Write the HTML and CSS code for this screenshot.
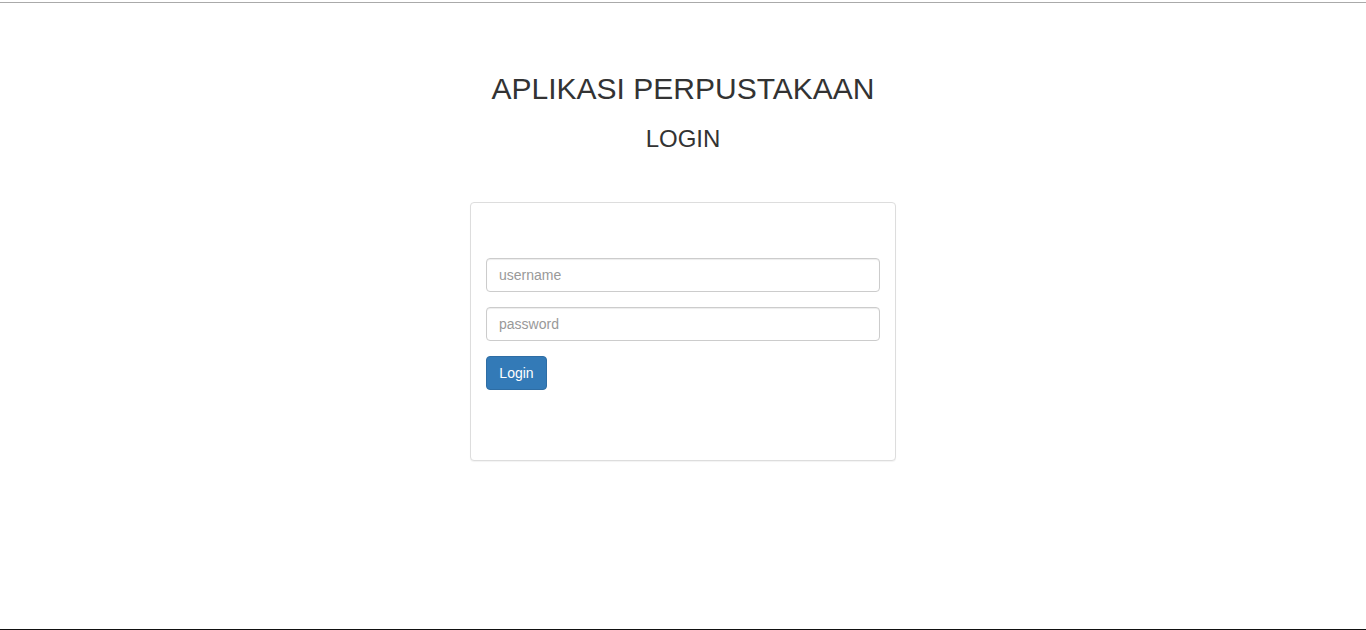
FILE: index.html
```html
<!DOCTYPE html>
<html lang="en">
<head>
    <meta charset="UTF-8">
    <meta name="viewport" content="width=device-width, initial-scale=1.0">
    <title>Login - Aplikasi Perpustakaan</title>
    <link rel="stylesheet" href="styles.css">
</head>
<body>
    <div class="topline"></div>
    <div class="container">
        <h2>APLIKASI PERPUSTAKAAN</h2>
        <h3>LOGIN</h3>
        <div class="panel">
            <form class="panel-body" onsubmit="return false;">
                <div class="form-group">
                    <input type="text" class="form-control" name="username" placeholder="username">
                </div>
                <div class="form-group">
                    <input type="password" class="form-control" name="password" placeholder="password">
                </div>
                <button type="submit" class="btn btn-primary">Login</button>
            </form>
        </div>
    </div>
    <div class="bottomline"></div>
</body>
</html>
```

FILE: styles.css
```css
* {
    box-sizing: border-box;
}
html, body {
    height: 100%;
}
body {
    font-family: "Liberation Sans", Arial, Helvetica, sans-serif;
    font-size: 14px;
    color: #333;
    background: #fff;
    margin: 0;
    display: flex;
    flex-direction: column;
    min-height: 100vh;
}
.topline {
    margin-top: 2px;
    height: 1px;
    background: #aaa;
}
.bottomline {
    margin-top: auto;
    height: 1px;
    background: #111;
}
.container {
    text-align: center;
}
h2 {
    font-size: 30px;
    font-weight: 500;
    line-height: 33px;
    margin: 69px 0 0;
}
h3 {
    font-size: 24px;
    font-weight: 500;
    line-height: 26px;
    margin: 21px 0 0;
}
.panel {
    width: 426px;
    margin: 50px auto 0;
    background: #fff;
    border: 1px solid #ddd;
    border-radius: 4px;
    box-shadow: 0 1px 1px rgba(0, 0, 0, 0.05);
    text-align: left;
}
.panel-body {
    margin: 0;
    padding: 55px 15px 70px;
}
.form-group {
    margin-bottom: 15px;
}
.form-control {
    display: block;
    width: 100%;
    height: 34px;
    padding: 6px 12px;
    font-family: inherit;
    font-size: 14px;
    color: #555;
    background: #fff;
    border: 1px solid #ccc;
    border-radius: 4px;
    box-shadow: inset 0 1px 1px rgba(0, 0, 0, 0.075);
}
.form-control::placeholder {
    color: #999;
}
.btn {
    display: inline-block;
    height: 34px;
    min-width: 61px;
    padding: 6px 12px;
    font-family: inherit;
    font-size: 14px;
    line-height: 20px;
    text-align: center;
    border: 1px solid transparent;
    border-radius: 4px;
    cursor: pointer;
}
.btn-primary {
    color: #fff;
    background: #337ab7;
    border-color: #2e6da4;
}
.btn-primary:hover {
    background: #286090;
}
```
